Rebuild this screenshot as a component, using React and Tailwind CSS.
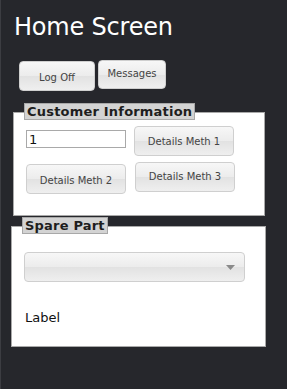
const btn =
  "rounded-[4px] border border-[#cfcfcf] bg-[linear-gradient(#f7f7f7,#ececec_50%,#e2e2e2_51%,#efefef)] text-[10px] text-[#444] font-['DejaVu_Sans',sans-serif] flex items-center justify-center";

function Legend({ children }) {
  return (
    <div className="absolute left-[10px] -top-[10px] bg-[#d3d3d3] border border-[#a8a8a8] px-[2px] h-[17px] flex items-center text-[13px] font-bold text-[#1e1e1e] leading-none tracking-[0.2px]">
      {children}
    </div>
  );
}

export default function App() {
  return (
    <div className="w-[287px] h-[389px] bg-[#26272c] border-l border-[#3c3d42] font-['DejaVu_Sans',sans-serif] overflow-hidden">
      <h1 className="pl-[13px] pt-[12px] text-[24px] leading-[30px] text-white tracking-[-0.2px]">Home Screen</h1>

      {/* top buttons */}
      <div className="flex items-start gap-[3px] pl-[18px] mt-[18px]">
        <button type="button" className={`${btn} w-[76px] h-[30px] mt-[1px] pt-[2px]`}>
          Log Off
        </button>
        <button type="button" className={`${btn} w-[68px] h-[29px] pb-[2px]`}>
          Messages
        </button>
      </div>

      {/* Customer Information */}
      <section className="relative ml-[12px] mt-[21px] w-[252px] h-[104px] bg-white border border-[#a9a9a9]">
        <Legend>Customer Information</Legend>
        <div className="flex gap-[8px] pl-[12px] pt-[13px]">
          <div className="flex flex-col gap-[16px]">
            <input
              type="text"
              defaultValue="1"
              className="w-[100px] h-[18px] mt-[4px] border border-[#a9a9a9] px-[2px] text-[13px] text-[#111] leading-none outline-none"
            />
            <button type="button" className={`${btn} w-[100px] h-[30px] pt-[2px]`}>
              Details Meth 2
            </button>
          </div>
          <div className="flex flex-col gap-[6px]">
            <button type="button" className={`${btn} w-[100px] h-[30px]`}>
              Details Meth 1
            </button>
            <button type="button" className={`${btn} w-[100px] h-[30px] ml-[1px] pb-[2px]`}>
              Details Meth 3
            </button>
          </div>
        </div>
      </section>

      {/* Spare Part */}
      <section className="relative ml-[10px] mt-[10px] w-[255px] h-[121px] bg-white border border-[#a9a9a9]">
        <Legend>Spare Part</Legend>
        <div className="pl-[12px] pt-[25px]">
          <div className={`${btn} w-[221px] h-[30px] justify-end pr-[9px]`}>
            <svg width="9" height="5" viewBox="0 0 9 5">
              <path d="M0 0h9L4.5 5z" fill="#8a8a8a" />
            </svg>
          </div>
          <div className="mt-[28px] pl-[1px] text-[13px] text-[#111] leading-[16px]">Label</div>
        </div>
      </section>
    </div>
  );
}
